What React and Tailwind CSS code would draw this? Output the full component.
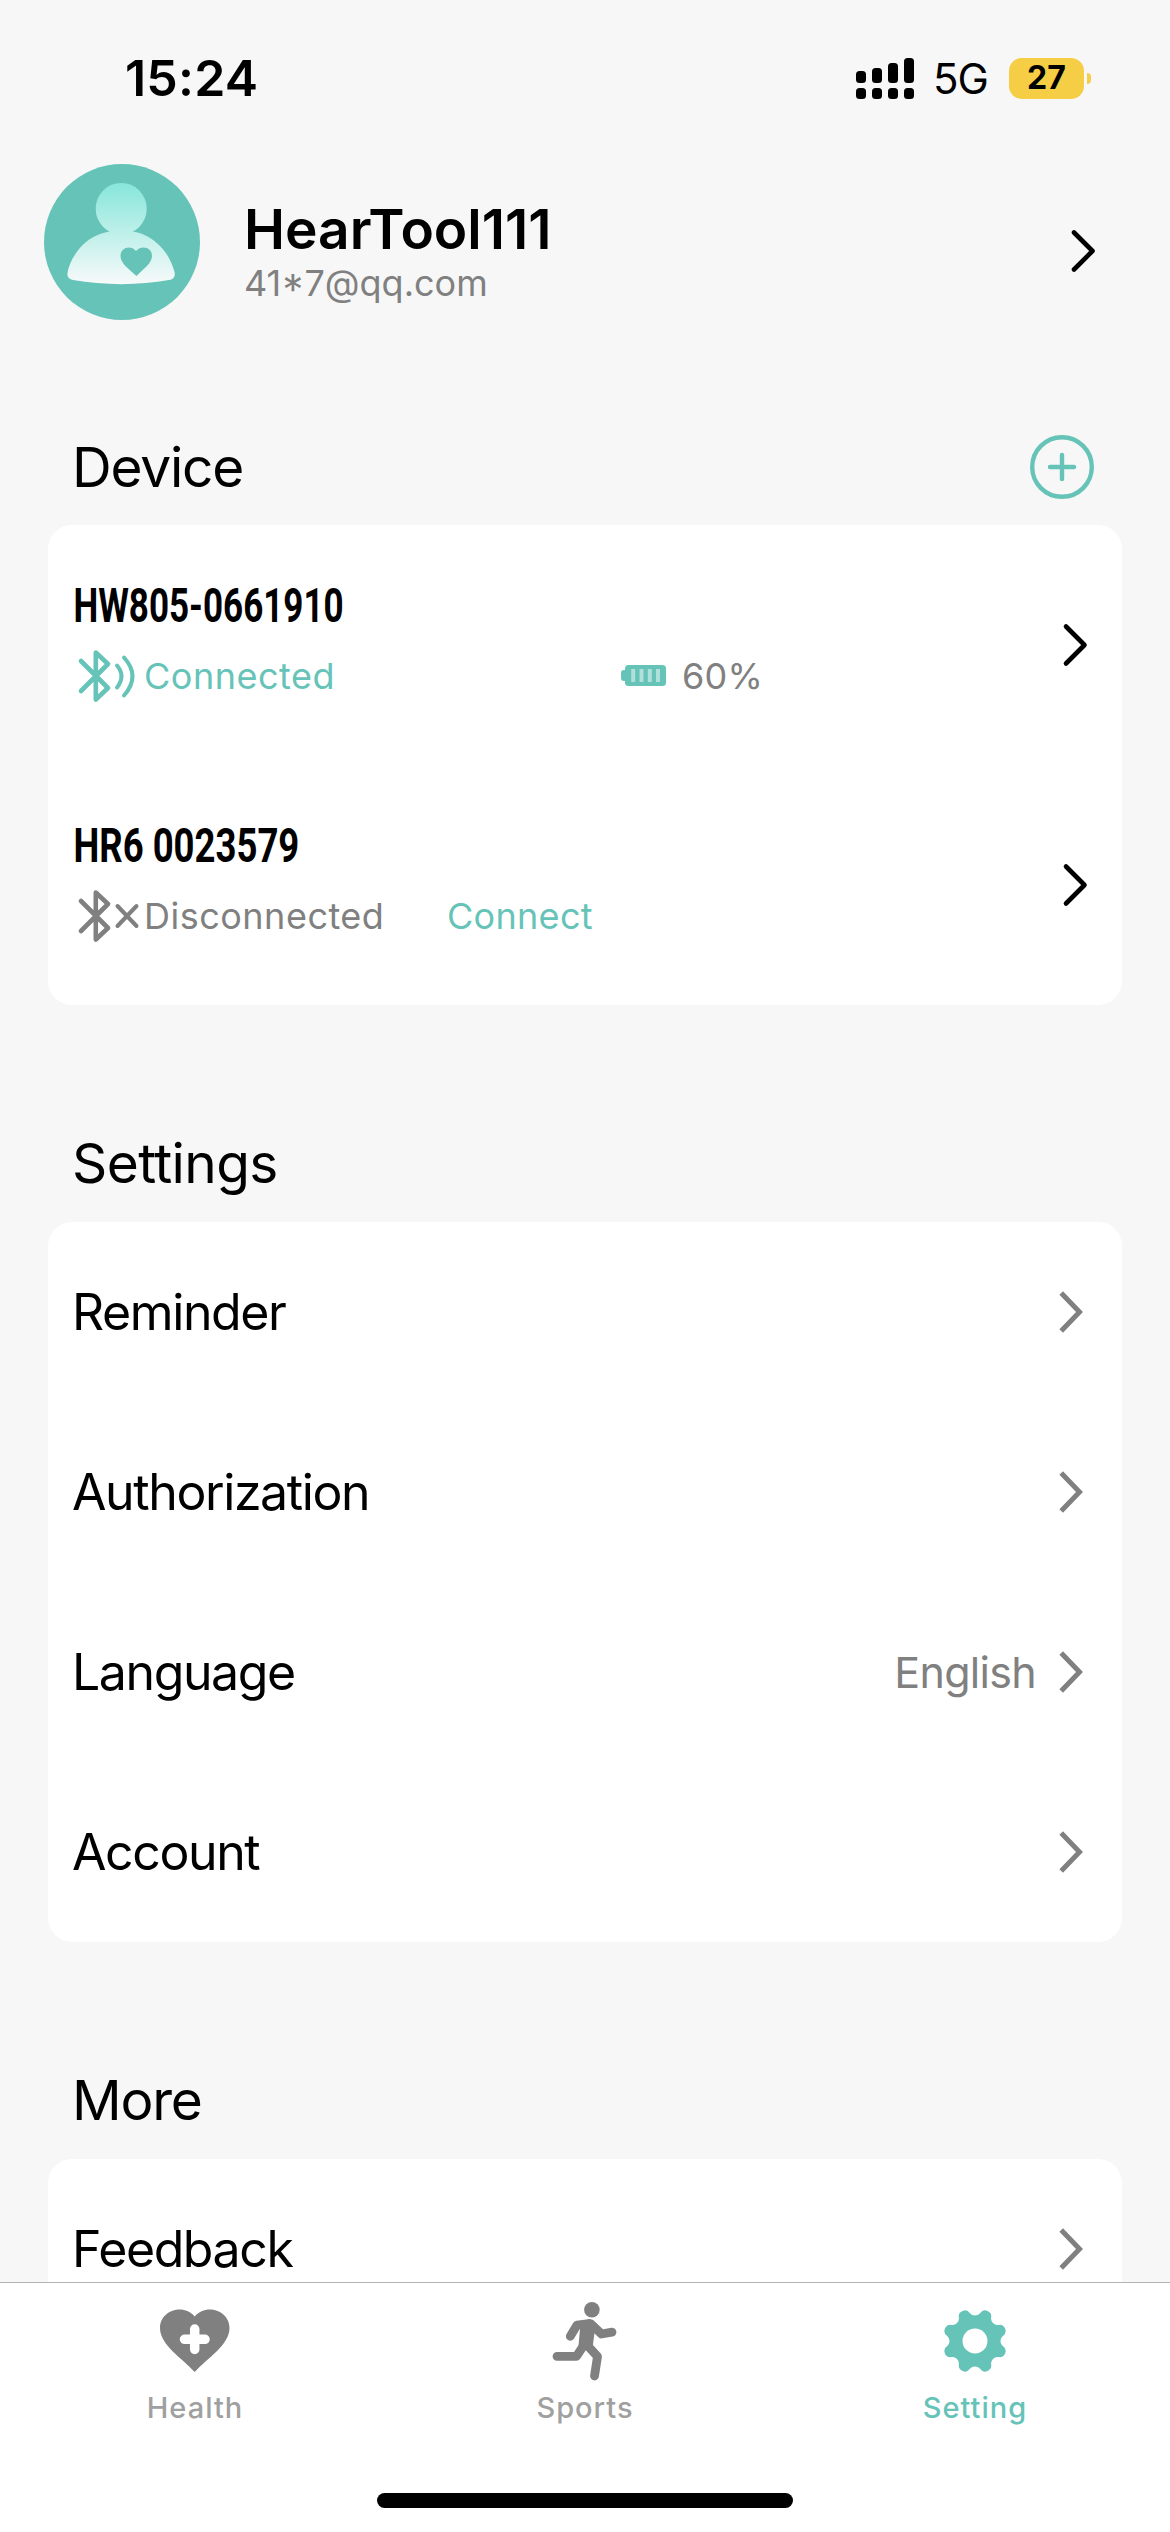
import React from 'react';

const TEAL = '#66c3b8';
const GRAY = '#808080';

const settings = [
  { label: 'Reminder' },
  { label: 'Authorization' },
  { label: 'Language', value: 'English' },
  { label: 'Account' },
];

const Chevron = ({ thin }) =>
  thin ? (
    <svg width="26" height="44" viewBox="0 0 26 44" fill="none">
      <path d="M4 3.5 L22.5 22 L4 40.5" stroke="#000" strokeWidth="4.6" strokeLinecap="round" strokeLinejoin="round" />
    </svg>
  ) : (
    <svg width="24" height="42" viewBox="0 0 24 42" fill="none">
      <path d="M2.2 2 L20.5 21 L2.2 40" stroke={GRAY} strokeWidth="5" />
    </svg>
  );

const Avatar = () => (
  <svg width="156" height="156" viewBox="0 0 156 156">
    <defs>
      <linearGradient id="person" gradientUnits="userSpaceOnUse" x1="0" y1="19" x2="0" y2="121">
        <stop offset="0" stopColor="#87e6da" />
        <stop offset="1" stopColor="#f8fafa" />
      </linearGradient>
    </defs>
    <circle cx="78" cy="78" r="78" fill={TEAL} />
    <g fill="url(#person)">
      <ellipse cx="77.2" cy="44.7" rx="25.5" ry="25.8" />
      <path d="M67 67 C54 70 44 74 35 85 C28 94 24.500 102 23.500 109 C23 113 25 115 29 116 C60 121.500 95 121.500 125 116 C130 115 131.500 112 130.500 108 C128 99 124 90 116 82 C108 74 99 69 87 67 Z" />
    </g>
    <path d="M92.500 112 C85 105 76.500 99.500 76.500 92 C76.500 83 87 81 92 87 C97.500 81 108 83 108 92 C108 99.500 99 105 92.500 112 Z" fill={TEAL} />
  </svg>
);

const Bluetooth = ({ connected }) => (
  <svg width="72" height="56" viewBox="-2 0 72 56" fill="none" stroke={connected ? TEAL : GRAY} strokeWidth="4.6" strokeLinecap="round" strokeLinejoin="round">
    <path d="M7 13 L34 40 L21.800 51.500 V4.500 L34 16 L7 43" />
    {connected ? (
      <>
        <path d="M43 17.500 Q52 28 43 39.500" strokeWidth="4" />
        <path d="M50 9.500 Q67 28 50 47.500" strokeWidth="4" />
      </>
    ) : (
      <path d="M43.500 18 L62.500 38 M62.500 18 L43.500 38" strokeWidth="4" />
    )}
  </svg>
);

const BatteryIcon = () => (
  <svg width="45" height="21" viewBox="0 0 45 21">
    <rect x="0" y="5" width="10" height="11" rx="3" fill={TEAL} />
    <rect x="4" y="0" width="41" height="21" rx="3.500" fill={TEAL} />
    {[10.2, 18.5, 26.8, 35].map((x) => (
      <rect key={x} x={x} y="4" width="4" height="13" fill="#b1e0da" />
    ))}
  </svg>
);

const HealthIcon = () => (
  <svg width="70" height="64" viewBox="0 0 70 64">
    <path d="M34.700 63 C22 49 0 36 0 19 C0 1 24 -6 34.700 7.500 C45.500 -6 69.500 1 69.500 19 C69.500 36 47.500 49 34.700 63 Z" fill={GRAY} />
    <path d="M34.700 20 V40.500 M24.500 30.300 H45" stroke="#fff" strokeWidth="9.500" strokeLinecap="round" />
  </svg>
);

const SportsIcon = () => (
  <svg width="68" height="84" viewBox="0 0 68 84" fill="none" stroke={GRAY} strokeWidth="8.800" strokeLinecap="round" strokeLinejoin="round">
    <circle cx="40.900" cy="10.700" r="7.800" fill={GRAY} stroke="none" />
    <path d="M38 24.500 L26 26 L19.300 37.300" />
    <path d="M40 25 L50.500 35 L61 33.200" />
    <path d="M29.500 24 L38 20 L45 27 L43.500 34 L41.500 49 L27.500 47 Z" fill={GRAY} stroke="none" />
    <path d="M33 46 L25.500 57.300 H6" />
    <path d="M36 46 L46.500 57.500 L43.500 77" />
  </svg>
);

// eight-lobed gear outline around (31, 31)
const gearPath = () => {
  const at = (deg, r) => {
    const a = (deg * Math.PI) / 180;
    return `${(31 + r * Math.cos(a)).toFixed(2)} ${(31 + r * Math.sin(a)).toFixed(2)}`;
  };
  let d = '';
  for (let i = 0; i < 8; i++) {
    const mid = 22.5 + i * 45;
    d += `${i === 0 ? 'M' : 'A6.500 6.500 0 0 0 '}${at(mid - 12.2, 28.3)} A6.100 6.100 0 0 1 ${at(mid + 12.2, 28.3)} `;
  }
  return `${d}A6.500 6.500 0 0 0 ${at(10.3, 28.3)} Z`;
};

const SettingIcon = () => (
  <svg width="62" height="62" viewBox="0 0 62 62">
    <path d={gearPath()} fill={TEAL} />
    <circle cx="31" cy="31" r="12.500" fill="#fff" />
  </svg>
);

const StatusBar = () => (
  <div className="flex h-[156px] shrink-0 items-center justify-between pl-[125px] pr-[79px]">
    <span className="text-[50px] font-semibold tracking-[0.2px]">15:24</span>
    <div className="flex items-center">
      <svg width="58" height="41" viewBox="0 0 58 41">
        {[13, 10, 5, 0].map((top, i) => (
          <g key={top}>
            <rect x={i * 16} y={top} width="10" height={25 - top} rx="3.500" />
            <rect x={i * 16} y="30" width="10" height="11" rx="3.500" />
          </g>
        ))}
      </svg>
      <span className="ml-[19px] w-[76px] text-[42px] tracking-[-1px]">5G</span>
      <div className="flex h-[41px] w-[75px] items-center justify-center rounded-[13px] bg-[#f5ce46] text-[32px] font-bold">27</div>
      <div className="ml-[3px] h-[11px] w-[4px] rounded-r-full bg-[#f5ce46]" />
    </div>
  </div>
);

const SectionTitle = ({ children, className = 'tracking-[-1.2px]' }) => (
  <h2 className={`text-[55px] leading-[64px] ${className}`}>{children}</h2>
);

const Device = ({ name, connected }) => (
  <div className="flex h-[240px] items-center justify-between pl-[24px] pr-[34px]">
    <div className="pb-[9px]">
      <div
        className={`h-[64px] origin-left whitespace-nowrap pl-[2px] font-[Roboto,sans-serif] text-[49px] font-bold leading-[60px] ${
          connected ? 'scale-x-[0.715]' : 'scale-x-[0.745]'
        }`}
      >
        {name}
      </div>
      <div className="mt-[6px] flex h-[60px] items-center text-[36px]">
        <Bluetooth connected={connected} />
        {connected ? (
          <>
            <span className="w-[477px] tracking-[0.5px] text-[#66c3b8]">Connected</span>
            <BatteryIcon />
            <span className="ml-[16px] tracking-[0.2px] text-[#808080]">60%</span>
          </>
        ) : (
          <>
            <span className="w-[303px] tracking-[0.5px] text-[#808080]">Disconnected</span>
            <span className="tracking-[0.3px] text-[#66c3b8]">Connect</span>
          </>
        )}
      </div>
    </div>
    <Chevron thin />
  </div>
);

const Row = ({ label, value }) => (
  <div className="flex h-[180px] shrink-0 items-center justify-between pl-[24px] pr-[39px]">
    <span className="text-[50px] tracking-[-1.4px]">{label}</span>
    <div className="flex items-center gap-[23px]">
      {value && <span className="text-[43px] tracking-[-0.7px] text-[#808080]">{value}</span>}
      <Chevron />
    </div>
  </div>
);

const Tab = ({ icon, label, active }) => (
  <div className="flex flex-1 flex-col items-center">
    <div className="flex h-[98px] items-center justify-center pt-[18px]">{icon}</div>
    <span className={`text-[29px] font-medium leading-[54px] tracking-[1px] ${active ? 'text-[#66c3b8]' : 'text-[#a0a0a0]'}`}>{label}</span>
  </div>
);

export default function App() {
  return (
    <div className="flex h-[2532px] w-[1170px] flex-col overflow-hidden bg-[#f7f7f7] font-[Inter,sans-serif] text-black">
      <StatusBar />

      <main className="flex min-h-0 flex-1 flex-col overflow-hidden px-[48px] pt-2">
        <div className="-ml-1 flex h-[156px] shrink-0 items-center pr-[26px]">
          <Avatar />
          <div className="ml-[44px] flex-1 pt-[23px]">
            <div className="text-[55px] font-semibold leading-[60px]">HearTool111</div>
            <div className="text-[36px] leading-[49px] text-[#808080]">41*7@qq.com</div>
          </div>
          <div className="pt-[18px]">
            <Chevron thin />
          </div>
        </div>

        <div className="mt-[115px] flex h-[64px] shrink-0 items-center justify-between pl-[24px] pr-[28px]">
          <SectionTitle>Device</SectionTitle>
          <svg width="64" height="64" viewBox="0 0 64 64" fill="none" stroke={TEAL} strokeWidth="4.400" strokeLinecap="round">
            <circle cx="32" cy="32" r="29.800" />
            <path d="M32 20 V44 M20 32 H44" />
          </svg>
        </div>
        <div className="mt-[26px] shrink-0 rounded-[24px] bg-white">
          <Device name="HW805-0661910" connected />
          <Device name="HR6 0023579" />
        </div>

        <div className="mt-[126px] shrink-0 pl-[24px]">
          <SectionTitle className="tracking-[-0.6px]">Settings</SectionTitle>
        </div>
        <div className="mt-[27px] shrink-0 rounded-[24px] bg-white">
          {settings.map((item) => (
            <Row key={item.label} {...item} />
          ))}
        </div>

        <div className="mt-[126px] shrink-0 pl-[24px]">
          <SectionTitle>More</SectionTitle>
        </div>
        <div className="mt-[27px] shrink-0 rounded-t-[24px] bg-white">
          <Row label="Feedback" />
        </div>
      </main>

      <nav className="flex h-[250px] shrink-0 flex-col items-center border-t border-[#b2b2b2] bg-white">
        <div className="flex w-full">
          <Tab icon={<HealthIcon />} label="Health" />
          <Tab icon={<SportsIcon />} label="Sports" />
          <Tab icon={<SettingIcon />} label="Setting" active />
        </div>
        <div className="mb-6 mt-auto h-[15px] w-[416px] rounded-full bg-black" />
      </nav>
    </div>
  );
}
